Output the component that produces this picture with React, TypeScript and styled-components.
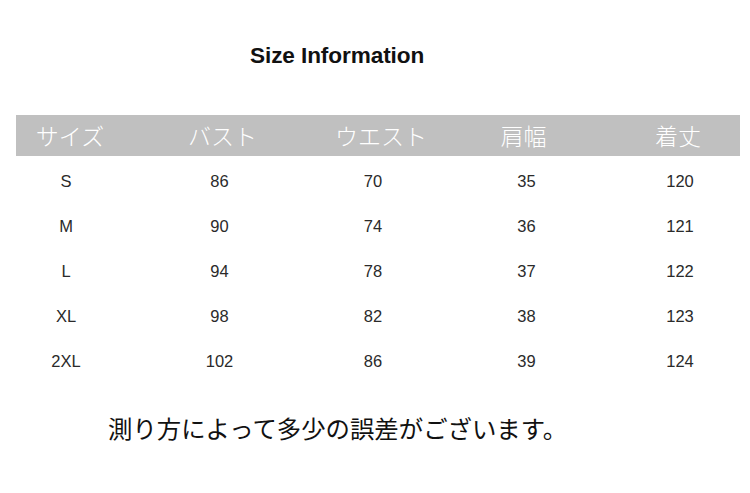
import React from "react";
import styled, { createGlobalStyle } from "styled-components";

const GlobalStyle = createGlobalStyle`
  html, body {
    margin: 0;
    padding: 0;
    background: #ffffff;
  }
  body {
    font-family: "Liberation Sans", Arial, sans-serif;
    color: #111111;
  }
`;

const Page = styled.div`
  width: 750px;
  height: 493px;
  padding-top: 42px;
  box-sizing: border-box;
  overflow: hidden;
`;

const Title = styled.h1`
  margin: 0 0 46px 250px;
  font-family: "Liberation Sans", Arial, sans-serif;
  font-size: 22.6px;
  line-height: 27px;
  font-weight: 700;
  letter-spacing: -0.1px;
  color: #111111;
`;

const Table = styled.div`
  margin-left: 16px;
  width: 724px;
`;

const HeadBar = styled.div`
  height: 41px;
  background: #c0c0c0;
  display: grid;
  grid-template-columns: repeat(5, 100px);
  column-gap: 53.5px;
  align-items: center;
`;

const HeadCell = styled.div<{ $shift?: number }>`
  text-align: center;
  font-family: "Noto Sans CJK JP", sans-serif;
  font-weight: 300;
  font-size: 23px;
  line-height: 41px;
  color: #ffffff;
  transform: translateX(${(p) => p.$shift ?? 0}px);
`;

const Body = styled.div`
  padding-top: 3px;
`;

const Row = styled.div`
  height: 45px;
  display: grid;
  grid-template-columns: repeat(5, 100px);
  column-gap: 53.5px;
  align-items: center;
`;

const Cell = styled.div`
  text-align: center;
  font-family: "Liberation Sans", Arial, sans-serif;
  font-size: 16.5px;
  line-height: 45px;
  color: #2a2a2a;
`;

const Note = styled.p`
  margin: 28px 0 0 108px;
  font-family: "Noto Sans CJK JP", sans-serif;
  font-size: 24.4px;
  line-height: 32px;
  color: #111111;
  white-space: nowrap;
`;

const headers: [string, number][] = [
  ["サイズ", 4],
  ["バスト", 3],
  ["ウエスト", 8],
  ["肩幅", -3],
  ["着丈", -2],
];

const rows = [
  ["S", "86", "70", "35", "120"],
  ["M", "90", "74", "36", "121"],
  ["L", "94", "78", "37", "122"],
  ["XL", "98", "82", "38", "123"],
  ["2XL", "102", "86", "39", "124"],
];

export default function App() {
  return (
    <>
      <GlobalStyle />
      <Page>
        <Title>Size Information</Title>
        <Table>
          <HeadBar>
            {headers.map(([h, s]) => (
              <HeadCell key={h} $shift={s}>
                {h}
              </HeadCell>
            ))}
          </HeadBar>
          <Body>
            {rows.map((r) => (
              <Row key={r[0]}>
                {r.map((v, i) => (
                  <Cell key={i}>{v}</Cell>
                ))}
              </Row>
            ))}
          </Body>
        </Table>
        <Note>測り方によって多少の誤差がございます。</Note>
      </Page>
    </>
  );
}
